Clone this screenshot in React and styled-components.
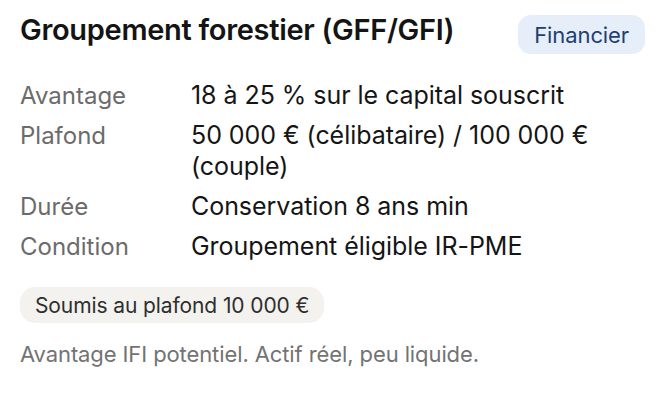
import React from 'react';
import styled, { createGlobalStyle } from 'styled-components';

const GlobalStyle = createGlobalStyle`
  body {
    margin: 0;
    background: #ffffff;
    font-family: Inter, "Noto Sans", sans-serif;
  }
`;

const Card = styled.div`
  width: 662px;
  height: 404px;
  box-sizing: border-box;
  padding: 12px 17px 0 20px;
  background: #ffffff;
`;

const Header = styled.div`
  display: flex;
  justify-content: space-between;
  align-items: flex-start;
`;

const Title = styled.h2`
  margin: 0;
  font-size: 29px;
  line-height: 36px;
  font-weight: 600;
  color: #141414;
  letter-spacing: -0.3px;
`;

const Badge = styled.span`
  display: inline-flex;
  align-items: center;
  margin-top: 3px;
  height: 39px;
  padding: 0 16px;
  border-radius: 13px;
  background: ${(p) => p.bg};
  color: ${(p) => p.fg};
  font-size: 22px;
  letter-spacing: -0.1px;
`;

const Details = styled.dl`
  display: grid;
  grid-template-columns: 171px 1fr;
  align-items: baseline;
  row-gap: 9px;
  margin: 26px 0 0;
  line-height: 31px;
`;

const Label = styled.dt`
  color: #6b6b6b;
  font-size: 24px;
`;

const Value = styled.dd`
  margin: 0;
  color: #151515;
  font-size: 25px;
  letter-spacing: -0.05px;
`;

const TagRow = styled.div`
  margin-top: 25px;
`;

const Tag = styled.span`
  display: inline-flex;
  align-items: center;
  height: 36px;
  padding: 0 15px;
  border-radius: 15px;
  background: #f3f2ee;
  color: #2e2e2e;
  font-size: 21px;
  letter-spacing: -0.1px;
`;

const Note = styled.p`
  margin: 18px 0 0;
  font-size: 22px;
  line-height: 26px;
  color: #737373;
  letter-spacing: -0.1px;
`;

const rows = [
  ['Avantage', '18 à 25 % sur le capital souscrit'],
  ['Plafond', '50 000 € (célibataire) / 100 000 € (couple)'],
  ['Durée', 'Conservation 8 ans min'],
  ['Condition', 'Groupement éligible IR-PME'],
];

export default function App() {
  return (
    <>
      <GlobalStyle />
      <Card>
        <Header>
          <Title>Groupement forestier (GFF/GFI)</Title>
          <Badge bg="#e6eef9" fg="#1e3f72">Financier</Badge>
        </Header>
        <Details>
          {rows.map(([k, v]) => (
            <React.Fragment key={k}>
              <Label>{k}</Label>
              <Value>{v}</Value>
            </React.Fragment>
          ))}
        </Details>
        <TagRow>
          <Tag>Soumis au plafond 10 000 €</Tag>
        </TagRow>
        <Note>Avantage IFI potentiel. Actif réel, peu liquide.</Note>
      </Card>
    </>
  );
}
